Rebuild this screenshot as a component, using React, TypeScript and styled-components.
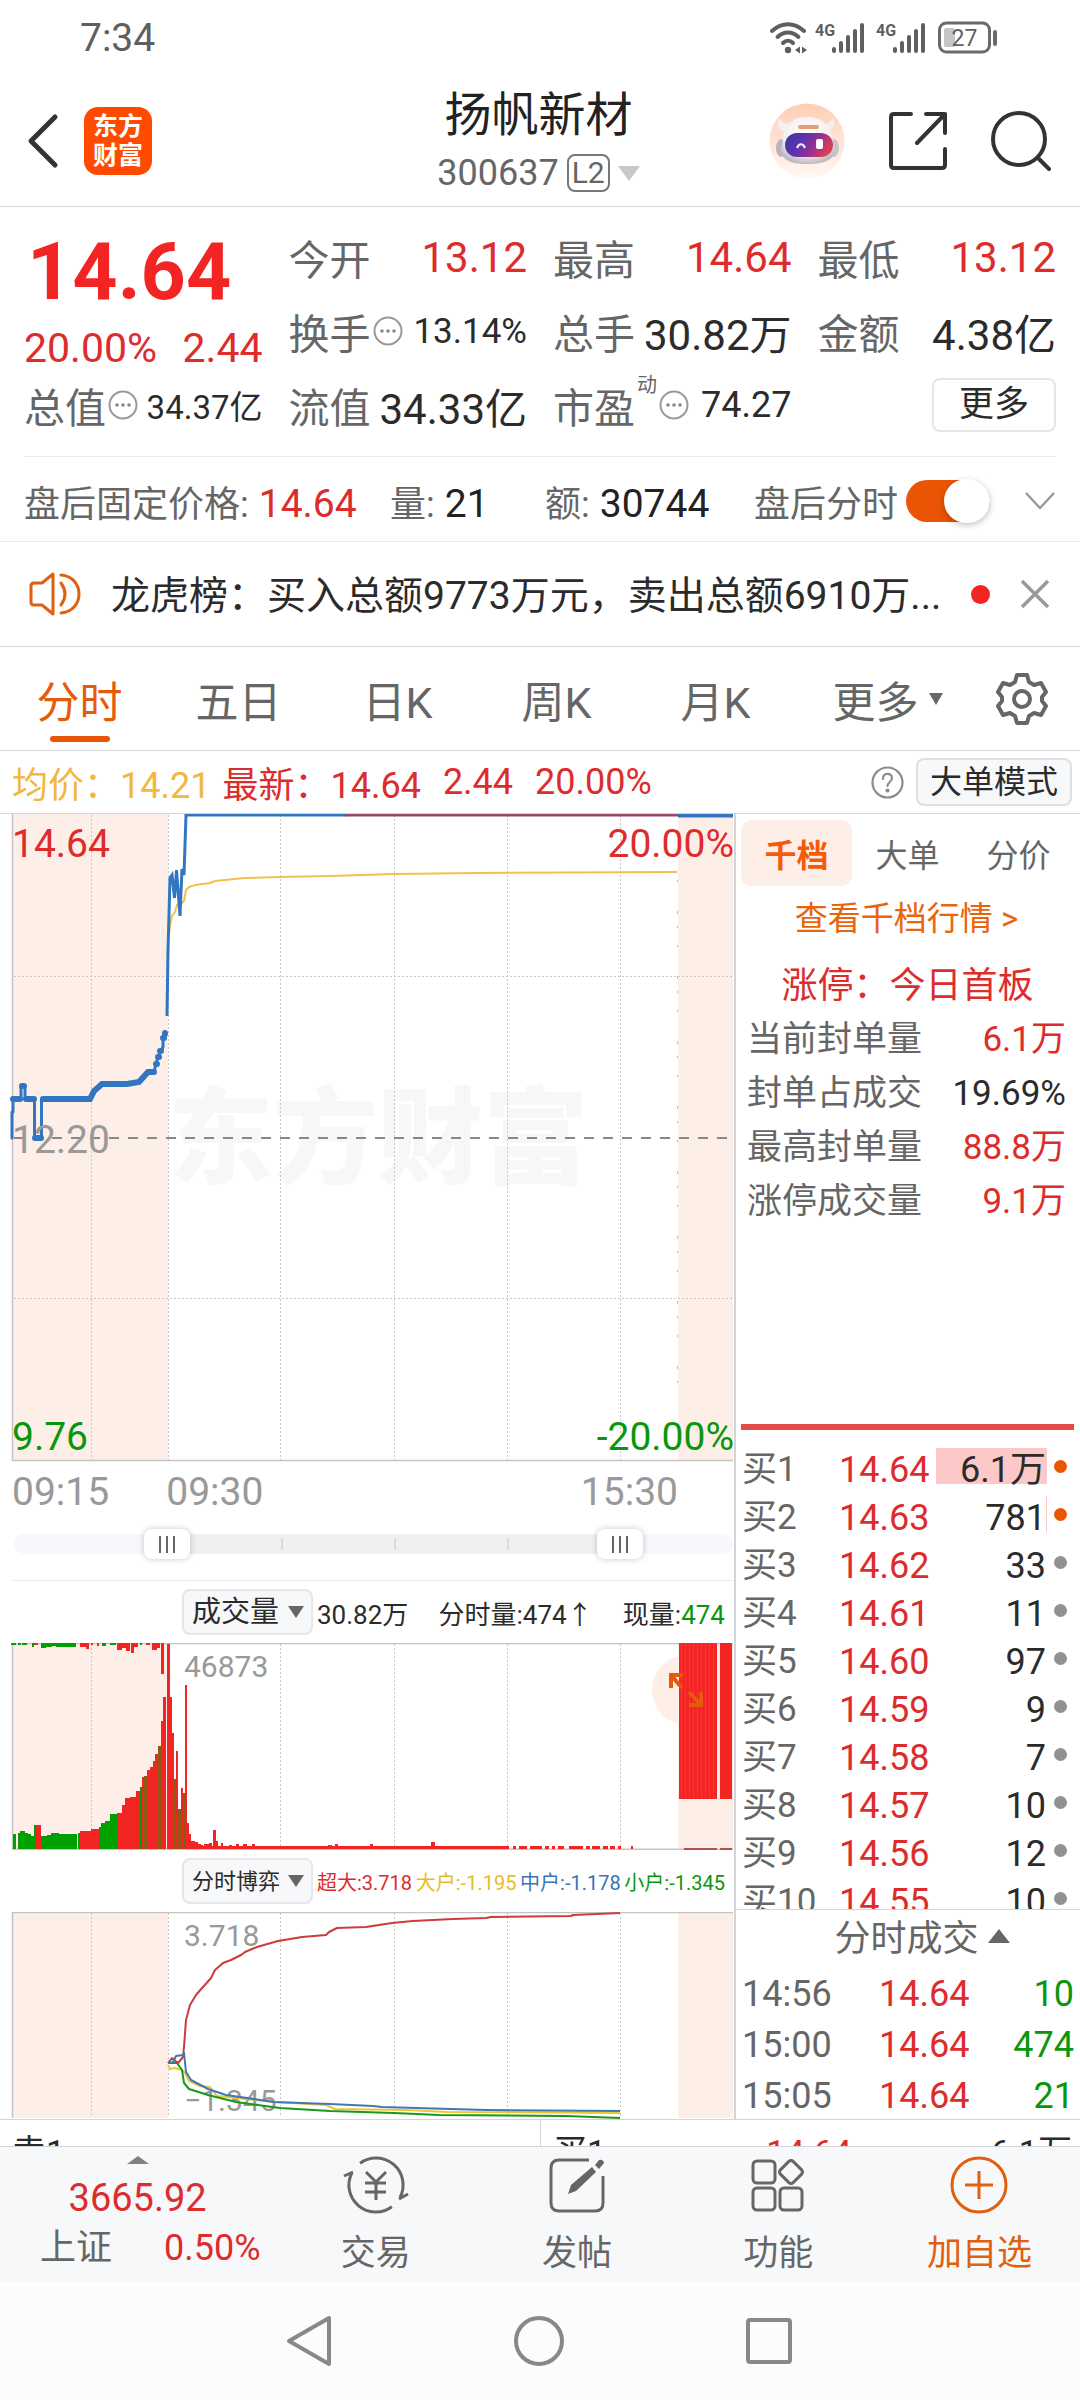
import React from "react";
import styled, { createGlobalStyle, css } from "styled-components";

const C = {
  red: "#dd2c2c",
  bright: "#f22424",
  green: "#0a960a",
  blue: "#3276c2",
  yellow: "#f0b840",
  orange: "#e65a0c",
  ink: "#2b2b2b",
  gray: "#666666",
  light: "#999999",
  line: "#d2d4d6",
  soft: "#ececec",
  tint: "#fdeee7",
  panel: "#f7f8fa",
};

const Global = createGlobalStyle`
  * { box-sizing: border-box; }
  body { margin: 0; background: #fff; }
  body, button, input, select { font-family: Roboto, "Noto Sans CJK SC", sans-serif; }
  button { border: 0; padding: 0; margin: 0; background: none; color: inherit; cursor: pointer; }
  svg { display: block; }
  h1, h2, p, dl, dd, dt { margin: 0; font-weight: 400; }
`;

const App = styled.div`
  min-height: 100vh;
  display: flex;
  flex-direction: column;
  color: ${C.ink};
  overflow: hidden;
`;

/* ---------- status bar ---------- */
const StatusBar = styled.div`
  height: 76px;
  padding: 0 82px 0 80px;
  display: flex;
  align-items: center;
  justify-content: space-between;
  color: #5f5f5f;
  font-size: 39px;
`;
const StatusIcons = styled.div`
  display: flex;
  align-items: center;
`;

/* ---------- header ---------- */
const Header = styled.header`
  height: 131px;
  padding: 0 29px 0 26px;
  display: grid;
  grid-template-columns: 1fr auto 1fr;
  align-items: center;
  border-bottom: 1px solid ${C.line};
`;
const HeaderSide = styled.div<{ $end?: boolean }>`
  display: flex;
  align-items: center;
  gap: ${(p) => (p.$end ? "44px" : "24px")};
  justify-content: ${(p) => (p.$end ? "flex-end" : "flex-start")};
`;
const Logo = styled.div`
  width: 68px;
  height: 68px;
  border-radius: 14px;
  background: #ff4a00;
  color: #fff;
  font-size: 25px;
  font-weight: 700;
  line-height: 29px;
  padding-top: 5px;
  text-align: center;
`;
const TitleBox = styled.div`
  display: flex;
  flex-direction: column;
  align-items: center;
  gap: 2px;
`;
const Title = styled.h1`
  font-size: 47px;
  line-height: 62px;
  color: #222;
`;
const Code = styled.button`
  display: flex;
  align-items: center;
  gap: 8px;
  font-size: 36px;
  line-height: 50px;
  color: ${C.gray};
`;
const Level = styled.span`
  border: 2px solid #777;
  border-radius: 8px;
  font-size: 30px;
  line-height: 34px;
  padding: 0 3px;
`;

/* ---------- quote ---------- */
const Quote = styled.section`
  margin: 0 24px;
  padding: 13px 0 14px;
  display: grid;
  grid-template-columns: repeat(4, minmax(0, 1fr));
  grid-auto-rows: 74px;
  column-gap: 26px;
  border-bottom: 1px solid ${C.soft};
`;
const PriceCell = styled.div`
  grid-row: span 2;
  color: ${C.red};
`;
const BigPrice = styled.div`
  font-size: 79px;
  font-weight: 700;
  line-height: 104px;
  padding-left: 3px;
  color: ${C.bright};
`;
const ChangeRow = styled.div`
  display: flex;
  justify-content: space-between;
  font-size: 41px;
  line-height: 48px;
`;
const QuoteCell = styled.div`
  display: flex;
  align-items: center;
  justify-content: space-between;
  white-space: nowrap;
  font-size: 41px;
`;
const QuoteLabel = styled.span`
  display: flex;
  align-items: center;
  gap: 2px;
  color: ${C.gray};
`;
const Sup = styled.sup`
  font-size: 20px;
  line-height: 20px;
  align-self: flex-start;
`;
const QuoteValue = styled.span<{ $red?: boolean; $size?: number }>`
  color: ${(p) => (p.$red ? C.red : C.ink)};
  font-size: ${(p) => p.$size ?? 42}px;
`;
const MoreCell = styled(QuoteCell)`
  justify-content: flex-end;
`;
const MoreButton = styled.button`
  width: 124px;
  height: 54px;
  border: 2px solid #e6e6e6;
  border-radius: 8px;
  font-size: 35px;
  line-height: 48px;
  color: ${C.ink};
`;

/* ---------- after-hours ---------- */
const AfterHours = styled.section`
  height: 85px;
  padding: 3px 24px 0;
  display: grid;
  grid-template-columns: 366fr 155fr 209fr 302fr;
  align-items: center;
  font-size: 36px;
  color: ${C.gray};
  white-space: nowrap;
  border-bottom: 1px solid ${C.soft};
`;
const AfterValue = styled.b<{ $red?: boolean }>`
  font-weight: 400;
  font-size: 39px;
  margin-left: 10px;
  color: ${(p) => (p.$red ? C.red : "#222")};
`;
const ToggleGroup = styled.div`
  display: flex;
  align-items: center;
  justify-content: space-between;
`;
const ToggleLabel = styled.label`
  display: flex;
  align-items: center;
  gap: 8px;
`;
const Toggle = styled.input`
  appearance: none;
  margin: 0;
  width: 84px;
  height: 42px;
  border-radius: 21px;
  background: #e95504;
  display: flex;
  align-items: center;
  justify-content: flex-end;
  &::before {
    content: "";
    width: 46px;
    height: 44px;
    border-radius: 23px;
    background: #fff;
    box-shadow: 0 2px 6px rgba(0, 0, 0, 0.25);
  }
`;

/* ---------- notice ---------- */
const Notice = styled.section`
  height: 105px;
  padding: 0 30px 0 29px;
  display: flex;
  align-items: center;
  border-bottom: 1px solid ${C.line};
`;
const NoticeText = styled.p`
  flex: 1;
  min-width: 0;
  padding: 0 0 4px 28px;
  font-size: 39px;
  white-space: nowrap;
  overflow: hidden;
`;
const UnreadDot = styled.i`
  width: 19px;
  height: 19px;
  border-radius: 50%;
  background: ${C.bright};
  margin-right: 30px;
`;

/* ---------- tabs ---------- */
const Tabs = styled.nav`
  height: 104px;
  padding-right: 2px;
  display: grid;
  grid-template-columns: repeat(5, 159fr) 171fr 112fr;
  border-bottom: 1px solid ${C.line};
`;
const Tab = styled.button<{ $on?: boolean }>`
  position: relative;
  display: flex;
  align-items: center;
  justify-content: center;
  gap: 10px;
  font-size: 43px;
  color: ${(p) => (p.$on ? C.orange : C.gray)};
  ${(p) =>
    p.$on &&
    css`
      &::after {
        content: "";
        position: absolute;
        bottom: 8px;
        width: 60px;
        height: 6px;
        border-radius: 3px;
        background: #e95504;
      }
    `}
`;
const MenuTab = styled(Tab)`
  padding-left: 14px;
`;

/* ---------- info row ---------- */
const InfoRow = styled.section`
  height: 63px;
  padding: 0 8px 0 12px;
  display: flex;
  align-items: center;
  font-size: 36px;
  white-space: nowrap;
  border-bottom: 1px solid ${C.line};
`;
const InfoItem = styled.span<{ $color: string; $gap: number }>`
  color: ${(p) => p.$color};
  margin-right: ${(p) => p.$gap}px;
`;
const InfoTools = styled.div`
  margin-left: auto;
  display: flex;
  align-items: center;
  gap: 12px;
`;
const ModeButton = styled.button`
  width: 156px;
  height: 48px;
  border: 2px solid #dcdfe3;
  border-radius: 8px;
  background: ${C.panel};
  font-size: 32px;
  line-height: 44px;
  color: ${C.ink};
`;

/* ---------- main ---------- */
const Main = styled.main`
  display: grid;
  grid-template-columns: minmax(0, 734fr) minmax(0, 346fr);
`;
const Left = styled.div`
  min-width: 0;
`;
const ChartSvg = styled.svg`
  width: 100%;
  height: auto;
  font-family: Roboto, "Noto Sans CJK SC", sans-serif;
`;
const Times = styled.div`
  height: 60px;
  display: grid;
  grid-template-columns: 154fr 511fr;
  padding: 0 56px 0 12px;
  align-items: center;
  font-size: 39px;
  color: ${C.light};
`;
const TimesPair = styled.div`
  display: flex;
  justify-content: space-between;
`;
const RangeRow = styled.div`
  height: 59px;
  margin: 0 1px 0 12px;
  padding: 7px 0 0 2px;
  border-bottom: 1px solid ${C.soft};
`;
const RangeTrack = styled.div`
  position: relative;
  height: 30px;
  &::before {
    content: "";
    position: absolute;
    inset: 5px 0;
    border-radius: 10px;
    background:
      linear-gradient(#dcdcdf, #dcdcdf) 37.2% 50% / 2px 12px no-repeat,
      linear-gradient(#dcdcdf, #dcdcdf) 53% 50% / 2px 12px no-repeat,
      linear-gradient(#dcdcdf, #dcdcdf) 68.7% 50% / 2px 12px no-repeat,
      linear-gradient(90deg, #f7f8fb 21%, #f0f0f3 21%, #f0f0f3 84%, #f7f8fb 84%);
  }
`;
const RangeInput = styled.input`
  appearance: none;
  position: absolute;
  inset: 0;
  width: 100%;
  height: 30px;
  margin: 0;
  background: none;
  pointer-events: none;
  &::-webkit-slider-thumb {
    appearance: none;
    pointer-events: auto;
    width: 46px;
    height: 30px;
    border-radius: 8px;
    background:
      linear-gradient(#666, #666) 15px 50% / 2px 17px no-repeat,
      linear-gradient(#666, #666) 22px 50% / 2px 17px no-repeat,
      linear-gradient(#666, #666) 29px 50% / 2px 17px no-repeat,
      #fff;
    box-shadow: 0 0 6px rgba(0, 0, 0, 0.22);
  }
`;
const SubHeader = styled.div`
  height: 62px;
  padding: 0 9px 0 182px;
  display: flex;
  align-items: center;
  white-space: nowrap;
`;
const Picker = styled.label`
  position: relative;
  display: block;
  svg {
    position: absolute;
    right: 9px;
    top: 17px;
    pointer-events: none;
  }
`;
const Select = styled.select<{ $size: number }>`
  appearance: none;
  display: block;
  width: 131px;
  height: 46px;
  padding: 0 0 0 8px;
  border: 2px solid #e4e6ea;
  border-radius: 8px;
  background: ${C.panel};
  font-size: ${(p) => p.$size}px;
  color: ${C.ink};
`;
const Readout = styled.div<{ $size: number }>`
  flex: 1;
  margin-left: 4px;
  display: flex;
  justify-content: space-between;
  font-size: ${(p) => p.$size}px;
`;
const Ink = styled.span<{ $color: string }>`
  color: ${(p) => p.$color};
`;
const ChartBox = styled.div`
  position: relative;
`;
const ExpandButton = styled.button`
  position: absolute;
  top: 12px;
  right: 13px;
  width: 70px;
  height: 70px;
  border-radius: 50%;
  display: flex;
  align-items: center;
  justify-content: center;
`;

/* ---------- right panel ---------- */
const Right = styled.aside`
  min-width: 0;
  border-left: 2px solid ${C.line};
  display: flex;
  flex-direction: column;
`;
const Stats = styled.div`
  min-height: 616px;
  margin: 0 6px 0 5px;
  padding-top: 6px;
  border-bottom: 6px solid #e44a4a;
`;
const DepthTabs = styled.div`
  display: grid;
  grid-template-columns: repeat(3, 1fr);
`;
const DepthTab = styled.button<{ $on?: boolean }>`
  height: 66px;
  border-radius: 10px;
  font-size: 32px;
  font-weight: ${(p) => (p.$on ? 700 : 400)};
  background: ${(p) => (p.$on ? C.tint : "none")};
  color: ${(p) => (p.$on ? "#f55a08" : C.gray)};
`;
const DepthLink = styled.a`
  display: block;
  margin-bottom: 8px;
  padding-right: 2px;
  text-align: center;
  font-size: 33px;
  line-height: 65px;
  color: #ea640c;
  text-decoration: none;
`;
const LimitTitle = styled.p`
  text-align: center;
  font-size: 36px;
  line-height: 54px;
  color: ${C.red};
`;
const StatList = styled.dl`
  padding: 0 8px 0 6px;
  font-size: 35px;
  line-height: 54px;
`;
const StatRow = styled.div`
  display: flex;
  justify-content: space-between;
  color: ${C.gray};
`;
const StatValue = styled.dd<{ $red?: boolean }>`
  color: ${(p) => (p.$red ? C.red : C.ink)};
`;
const Book = styled.div`
  flex: 1 1 0;
  min-height: 0;
  overflow: hidden;
  padding: 18px 6px 0 6px;
`;
const BookTable = styled.table`
  width: 100%;
  table-layout: fixed;
  border-collapse: collapse;
  font-size: 36px;
  line-height: 44px;
  white-space: nowrap;
  th, td { padding: 0; font-weight: 400; text-align: left; vertical-align: top; height: 48px; }
  th { width: 97px; font-size: 35px; color: ${C.gray}; }
`;
const PriceTd = styled.td`
  width: 97px;
  color: ${C.red};
`;
const Qty = styled.span<{ $fill: number }>`
  display: block;
  height: 36px;
  padding-right: 1px;
  text-align: right;
  background: linear-gradient(#fcc8c8, #fcc8c8) right / ${(p) => p.$fill}% 100% no-repeat;
`;
const DotTd = styled.td`
  width: 27px;
`;
const Dot = styled.i<{ $on?: boolean }>`
  display: block;
  width: 13px;
  height: 13px;
  margin: 12px 0 0 7px;
  border-radius: 50%;
  background: ${(p) => (p.$on ? "#e95504" : "#909095")};
`;
const Trades = styled.section`
  height: 210px;
  border-top: 1px solid ${C.line};
  padding: 0 6px 0 6px;
`;
const TradesTitle = styled.button`
  width: 100%;
  display: flex;
  justify-content: center;
  gap: 9px;
  padding-left: 28px;
  font-size: 36px;
  line-height: 59px;
  color: ${C.gray};
  svg { margin-top: 19px; }
`;
const TradesTable = styled.table`
  width: 100%;
  table-layout: fixed;
  border-collapse: collapse;
  font-size: 36px;
  line-height: 51px;
  th, td { padding: 0; font-weight: 400; text-align: left; }
  th { width: 137px; color: ${C.gray}; }
  td { color: ${C.red}; }
  td + td { color: ${C.green}; text-align: right; }
`;

/* ---------- bottom ---------- */
const Peek = styled.section`
  height: 28px;
  overflow: hidden;
  display: grid;
  grid-template-columns: 1fr 1fr;
  border: solid ${C.line};
  border-width: 1px 0;
  font-size: 34px;
  line-height: 64px;
`;
const PeekSide = styled.div`
  padding: 0 8px 0 12px;
  display: grid;
  grid-template-columns: 214fr 84fr 221fr;
  height: 64px;
  & + & { border-left: 1px solid ${C.line}; }
  span:last-child:not(:first-child) { text-align: right; }
`;
const BottomNav = styled.nav`
  height: 135px;
  background: ${C.panel};
  display: grid;
  grid-template-columns: 275fr repeat(4, 201fr);
`;
const IndexBox = styled.button`
  display: flex;
  flex-direction: column;
  align-items: center;
  padding: 9px 0 0;
  color: ${C.red};
  font-size: 38px;
  line-height: 49px;
`;
const IndexValue = styled.span`
  margin-top: 10px;
`;
const IndexRow = styled.span`
  display: flex;
  gap: 52px;
  align-self: stretch;
  padding-left: 40px;
  font-size: 36px;
  line-height: 51px;
`;
const NavItem = styled.button<{ $hot?: boolean }>`
  display: flex;
  flex-direction: column;
  align-items: center;
  gap: 16px;
  padding-top: 9px;
  font-size: 35px;
  line-height: 48px;
  color: ${(p) => (p.$hot ? "#e0600f" : C.gray)};
`;
const SystemNav = styled.nav`
  height: 118px;
  background: #fcfcfc;
  display: flex;
  align-items: center;
  justify-content: center;
  gap: 182px;
  padding-right: 2px;
`;

/* ---------- icons ---------- */
const Signal = ({ gap = 0 }: { gap?: number }) => (
  <svg width={50 + gap} height="34" viewBox={`0 0 ${50 + gap} 34`} fill="#5f5f5f">
    <text x="0" y="15" fontSize="16" fontWeight="700">4G</text>
    <rect x="17" y="26" width="4" height="6" rx="2" />
    <rect x="24" y="20" width="4" height="12" rx="2" />
    <rect x="31" y="14" width="4" height="18" rx="2" />
    <rect x="38" y="8" width="4" height="24" rx="2" />
    <rect x="45" y="2" width="4" height="30" rx="2" />
  </svg>
);

const WifiIcon = () => (
  <svg width="45" height="34" viewBox="0 0 45 34" fill="none" stroke="#5f5f5f" strokeWidth="4" strokeLinecap="round">
    <path d="M2 10C12 1 24 1 34 10" />
    <path d="M7.500 16C14 10 22 10 28.500 16" />
    <path d="M13 22C16 19 20 19 23 22" />
    <circle cx="18" cy="29" r="3.200" fill="#5f5f5f" stroke="none" />
    <path d="M30 25.500v7l-5-3.500zM32 25.500v7l5-3.500z" fill="#5f5f5f" stroke="none" />
  </svg>
);

const BatteryIcon = () => (
  <svg width="60" height="34" viewBox="0 0 60 34">
    <rect x="1.500" y="2" width="50" height="29" rx="7" fill="none" stroke="#6a6a6a" strokeWidth="3" />
    <rect x="6" y="7" width="11" height="19" rx="2" fill="#c6c6c6" />
    <text x="26.500" y="25" fontSize="23" textAnchor="middle" fill="#5f5f5f">27</text>
    <rect x="55" y="9" width="4" height="16" rx="2" fill="#6a6a6a" />
  </svg>
);

const BackIcon = () => (
  <svg width="34" height="56" viewBox="0 0 34 56" fill="none" stroke="#333" strokeWidth="5" strokeLinecap="round" strokeLinejoin="round">
    <path d="M29 4L5 28l24 24" />
  </svg>
);

const RobotIcon = () => (
  <svg width="76" height="76" viewBox="0 0 76 76">
    <defs>
      <linearGradient id="halo" x1="0" y1="0" x2="0" y2="1">
        <stop offset="0" stopColor="#ffcdb4" />
        <stop offset="0.500" stopColor="#ffe3d6" />
        <stop offset="1" stopColor="#fff8f5" />
      </linearGradient>
      <linearGradient id="visor" x1="0" y1="0" x2="1" y2="0.300">
        <stop offset="0" stopColor="#3a3a9e" />
        <stop offset="0.400" stopColor="#5b32b0" />
        <stop offset="0.750" stopColor="#a02f8e" />
        <stop offset="1" stopColor="#d63f55" />
      </linearGradient>
      <radialGradient id="shell" cx="0.500" cy="0.350" r="0.650">
        <stop offset="0" stopColor="#ffffff" />
        <stop offset="0.700" stopColor="#f3efef" />
        <stop offset="1" stopColor="#bdb9be" />
      </radialGradient>
    </defs>
    <circle cx="38" cy="38" r="37.500" fill="url(#halo)" />
    <path d="M10 15c-3 7 0 12 7 15l7-10c-7 2-11 0-14-5zM64 15c3 7 0 12-7 15l-7-10c7 2 11 0 14-5z" fill="#f4f0ef" />
    <ellipse cx="12" cy="45" rx="5" ry="9" fill="#b9b5bb" />
    <ellipse cx="65" cy="45" rx="5" ry="9" fill="#cbc5c9" />
    <path d="M14 36c1-15 10-22 24-22s24 8 25 22l3 12c-2 11-15 13-28 13s-24-2-26-13z" fill="url(#shell)" />
    <rect x="29" y="22" width="21" height="4" rx="2" fill="#e5a06f" />
    <rect x="16" y="30" width="48" height="24" rx="12" fill="url(#visor)" />
    <path d="M28 45c2-5 6-5 8 0" fill="none" stroke="#f4e8ff" strokeWidth="2.200" />
    <rect x="47" y="36" width="7" height="10" rx="2" fill="#fff" />
  </svg>
);

const ShareIcon = () => (
  <svg width="58" height="60" viewBox="0 0 58 60" fill="none" stroke="#333" strokeWidth="4" strokeLinecap="round" strokeLinejoin="round">
    <path d="M22 3H5Q2 3 2 6v48q0 3 3 3h48q3 0 3-3V38" />
    <path d="M37 3h19v19M56 3L28 32" />
  </svg>
);

const SearchIcon = () => (
  <svg width="60" height="60" viewBox="0 0 60 60" fill="none" stroke="#333" strokeWidth="4" strokeLinecap="round">
    <circle cx="28" cy="28" r="26" />
    <path d="M47 47l11 11" />
  </svg>
);

const MoreDots = () => (
  <svg width="30" height="30" viewBox="0 0 30 30">
    <circle cx="15" cy="15" r="13.500" fill="none" stroke="#999" strokeWidth="2" />
    <circle cx="9" cy="15" r="1.800" fill="#888" />
    <circle cx="15" cy="15" r="1.800" fill="#888" />
    <circle cx="21" cy="15" r="1.800" fill="#888" />
  </svg>
);

const Caret = ({ w, h, up, color = "#666" }: { w: number; h: number; up?: boolean; color?: string }) => (
  <svg width={w} height={h} viewBox="0 0 10 10" preserveAspectRatio="none" fill={color}>
    <path d={up ? "M0 10L5 0l5 10z" : "M0 0h10L5 10z"} />
  </svg>
);

const SpeakerIcon = () => (
  <svg width="54" height="46" viewBox="0 0 54 46" fill="none" stroke="#e0600f" strokeWidth="3" strokeLinecap="round" strokeLinejoin="round">
    <path d="M24 3v40L13 34H5q-3 0-3-3V15q0-3 3-3h8z" />
    <path d="M32 12q8 11 0 22M32 4c24 2 24 36 0 38" />
  </svg>
);

const GearIcon = () => (
  <svg width="52" height="52" viewBox="0 0 52 52" fill="none" stroke="#666" strokeWidth="4" strokeLinejoin="round">
    <path d="M21 2h10l2 7 5 3 7-2 5 9-4 5v4l4 5-5 9-7-2-5 3-2 7H21l-2-7-5-3-7 2-5-9 4-5v-4l-4-5 5-9 7 2 5-3z" />
    <circle cx="26" cy="26" r="8" />
  </svg>
);

const HelpIcon = () => (
  <svg width="33" height="33" viewBox="0 0 33 33" fill="none" stroke="#8c8c8c" strokeWidth="2.200" strokeLinecap="round">
    <circle cx="16.500" cy="16.500" r="15" />
    <path d="M12 13c0-7 9-6.500 9-1 0 4-4.500 4-4.500 8" />
    <circle cx="16.500" cy="24.500" r="1" fill="#8c8c8c" />
  </svg>
);

const NAV_ICONS: Record<string, React.ReactNode> = {
  交易: (
    <svg width="66" height="58" viewBox="0 0 66 58" fill="none" stroke="#666" strokeWidth="3">
      <path d="M17.100 7.200A27 27 0 0 1 57.100 41.300M48.900 50.800A27 27 0 0 1 8.900 16.700" />
      <path d="M1 20l9-4M65 38l-9 5" />
      <path d="M23 16l10 10 10-10M22 27h21M22 36h21M33 26v18" />
    </svg>
  ),
  发帖: (
    <svg width="56" height="58" viewBox="0 0 56 58" fill="none" stroke="#666" strokeWidth="3">
      <path d="M40 4H10q-8 0-8 8v35q0 8 8 8h36q8 0 8-8V20" />
      <path d="M19 38l3-9 21-18 4 5-20 19z M46 9l4-5q4-1 5 3l-5 6z" fill="#666" stroke="none" />
    </svg>
  ),
  功能: (
    <svg width="54" height="58" viewBox="0 0 54 58" fill="none" stroke="#666" strokeWidth="3">
      <rect x="2" y="5" width="22" height="22" rx="4" />
      <rect x="2" y="32" width="22" height="22" rx="4" />
      <rect x="29" y="32" width="22" height="22" rx="4" />
      <rect x="31" y="7" width="18" height="18" rx="3" transform="rotate(45 40 16)" />
    </svg>
  ),
  加自选: (
    <svg width="58" height="58" viewBox="0 0 58 58" fill="none" stroke="#e0600f" strokeWidth="3">
      <circle cx="29" cy="29" r="27" />
      <path d="M15 29h28M29 15v28" />
    </svg>
  ),
};

/* ---------- data ---------- */
const GRID_X = [91, 168, 280, 394, 507, 620];

const BOOK: [string, string, string, number][] = [
  ["买1", "14.64", "6.1万", 100],
  ["买2", "14.63", "781", 1],
  ["买3", "14.62", "33", 0],
  ["买4", "14.61", "11", 0],
  ["买5", "14.60", "97", 0],
  ["买6", "14.59", "9", 0],
  ["买7", "14.58", "7", 0],
  ["买8", "14.57", "10", 0],
  ["买9", "14.56", "12", 0],
  ["买10", "14.55", "10", 0],
];

const STATS: [string, string, boolean][] = [
  ["当前封单量", "6.1万", true],
  ["封单占成交", "19.69%", false],
  ["最高封单量", "88.8万", true],
  ["涨停成交量", "9.1万", true],
];

const TRADES = [
  ["14:56", "14.64", "10"],
  ["15:00", "14.64", "474"],
  ["15:05", "14.64", "21"],
];

/* volume bars: [x, width, height, colour] measured up from the base line */
const R = "#f22424";
const G = "#00a000";
const M = "#8c5a10";
const VOLUME: [number, number, number, string][] = [
  [13, 3, 15, G], [18, 2, 16, G], [20, 5, 18, G], [25, 3, 16, G], [28, 3, 15, G], [31, 3, 13, G], [34, 2, 24, G],
  [36, 5, 24, R], [41, 6, 13, G], [47, 4, 14, G], [51, 8, 16, G], [59, 8, 15, G], [67, 10, 15, G],
  [78, 2, 16, G], [80, 11, 18, R], [91, 8, 20, R], [99, 2, 22, G], [101, 4, 26, G], [105, 5, 28, G], [110, 7, 35, G],
  [117, 5, 36, R], [122, 3, 44, R], [125, 5, 51, R], [130, 6, 52, R], [136, 4, 58, R], [140, 2, 62, G],
  [142, 2, 72, R], [144, 3, 73, M], [147, 3, 79, R], [150, 3, 82, R], [153, 2, 88, R], [155, 3, 95, R],
  [158, 3, 103, M], [161, 2, 128, R], [163, 3, 152, R], [167, 3, 205, R], [170, 2, 152, R],
  [172, 2, 116, R], [174, 2, 70, M], [176, 2, 98, R], [178, 3, 40, M], [181, 2, 61, R], [183, 2, 56, M],
  [185, 2, 164, R], [187, 2, 26, R], [189, 2, 15, R], [191, 4, 8, R], [195, 3, 7, R], [198, 3, 5, R],
  [201, 2, 4, R], [204, 5, 5, R], [209, 3, 6, R], [213, 3, 19, R], [216, 2, 8, R], [221, 2, 6, R],
  [229, 3, 4, R], [236, 3, 5, R], [243, 4, 5, R], [252, 3, 5, R], [201, 308, 3, R],
  [328, 4, 4, R], [335, 3, 5, R], [370, 3, 5, R], [431, 4, 7, R],
  [513, 3, 3, R], [519, 8, 3, R], [530, 12, 3, R], [545, 4, 3, R], [552, 3, 3, R], [558, 6, 3, R],
  [569, 14, 3, R], [586, 4, 3, R], [592, 8, 3, R], [603, 5, 3, R], [610, 5, 3, R], [618, 3, 3, R], [631, 2, 3, R],
];
/* bars hanging from the top line */
const UNMATCHED: [number, number, number, string][] = [
  [11, 5, 1, G], [18, 3, 1, G], [22, 5, 1, G], [32, 2, 3, G], [34, 4, 1, R], [41, 5, 4, G], [46, 6, 3, G],
  [52, 4, 2, G], [56, 8, 3, G], [64, 12, 3, G], [80, 6, 3, R], [86, 3, 5, R], [91, 2, 1, R], [97, 2, 2, R],
  [102, 4, 2, G], [110, 6, 1, G], [117, 5, 6, R], [122, 4, 4, R], [126, 4, 7, R], [131, 3, 9, R], [134, 4, 3, R],
  [140, 2, 1, G], [146, 4, 1, R], [152, 5, 6, R], [157, 3, 4, R], [161, 3, 30, R],
];
const CLOSED_X = [679, 683, 687, 691, 695, 699, 703, 707, 711];

const GridLines = ({ top, bottom }: { top: number; bottom: number }) => (
  <g stroke="#c9c9c9" strokeWidth="1" strokeDasharray="2 2">
    {GRID_X.map((x) => (
      <path key={x} d={`M${x + 0.5} ${top}V${bottom}`} />
    ))}
  </g>
);

const PriceChart = () => (
  <ChartSvg viewBox="0 814 734 648" role="img" aria-label="分时">
    <rect x="12" y="814" width="156" height="646" fill={C.tint} />
    <rect x="678" y="814" width="55" height="646" fill={C.tint} />
    <text x="168" y="1175" fontSize="105" fontWeight="900" fill="#f7f7f7">东方财富</text>
    <GridLines top={815} bottom={1460} />
    <path d="M14 976.500H733M14 1298.500H733" stroke="#c9c9c9" strokeDasharray="2 2" />
    <path d="M12.500 814V1460.500H733" fill="none" stroke="#c4c4c4" strokeWidth="1.500" />
    <path d="M677.500 880V1400" stroke="#f0a8a8" strokeWidth="1" strokeDasharray="2 29 3 12 2 17" />
    <path d="M14 1138H733" stroke="#858a88" strokeWidth="2" strokeDasharray="10 9" />
    <path
      d="M169 935L170 925 172 916 175 912 177 905 180 905 184 901 186 890 189 887 195 885 210 883 215 881 245 878 280 877 330 876 394 874 477 873 677 872"
      fill="none" stroke="#f3c04f" strokeWidth="2"
    />
    <path
      d="M12 1138V1112h1V1099H21V1086h4V1099H34.500V1138H41.500V1099H90L94 1091 98 1087 102 1084H127L133 1083 139 1081 143 1078 148 1072H154L156 1064 158 1057 161 1051 163 1047V1038L165 1032"
      fill="none" stroke={C.blue} strokeWidth="3" strokeLinejoin="round" strokeLinecap="round"
    />
    <path
      d="M13 1099h7M22 1086h2M26 1099h8M35 1138h6M43 1099H90L94 1091 102 1084H127L139 1082 148 1072H154M156 1064h1M158 1057h1M160 1051h1M163 1038h1M165 1033v1"
      fill="none" stroke={C.blue} strokeWidth="6" strokeLinecap="round"
    />
    <path
      d="M167 1016L168 950 169 915 170 878 172 875 174.500 898 176.500 870 180 916 182 869 184 875 186 815H346"
      fill="none" stroke={C.blue} strokeWidth="3"
    />
    <path d="M345 815H678" stroke="#98466a" strokeWidth="3" />
    <path d="M678 815.500H733" stroke={C.blue} strokeWidth="4" />
    <g fontSize="39">
      <text x="12" y="857" fill={C.red}>14.64</text>
      <text x="734" y="857" fill={C.red} textAnchor="end">20.00%</text>
      <text x="12" y="1153" fill="#999">12.20</text>
      <text x="12" y="1450" fill={C.green}>9.76</text>
      <text x="734" y="1450" fill={C.green} textAnchor="end">-20.00%</text>
    </g>
  </ChartSvg>
);

const VolumeChart = () => (
  <ChartSvg viewBox="0 1643 734 207" role="img" aria-label="成交量">
    <rect x="12" y="1643" width="156" height="206" fill={C.tint} />
    <rect x="678" y="1643" width="55" height="206" fill={C.tint} />
    <circle cx="687" cy="1690" r="35" fill="#fdeee7" />
    <GridLines top={1644} bottom={1848} />
    <path d="M12.500 1849V1643.500H733M12 1849.300H733" fill="none" stroke="#c4c4c4" strokeWidth="1.500" />
    {VOLUME.map(([x, w, h, c], i) => (
      <rect key={i} x={x} y={1849 - h} width={w} height={h} fill={c} />
    ))}
    {UNMATCHED.map(([x, w, h, c], i) => (
      <rect key={i} x={x} y={1643} width={w} height={h + 1} fill={c} />
    ))}
    <rect x="679" y="1643" width="38" height="156" fill={R} />
    <rect x="720" y="1643" width="12" height="156" fill={R} />
    {CLOSED_X.map((x) => (
      <rect key={x} x={x + 2} y="1643" width="1" height="155" fill="#f4392f" />
    ))}
    <path d="M684 1849h33M720 1849h12" stroke="#a02828" strokeWidth="1.500" />
    <text x="184" y="1677" fontSize="30" fill="#999">46873</text>
  </ChartSvg>
);

const FLOWS: [string, string][] = [
  ["#efc62e", "M168 2065L170 2069 175 2068 182 2070 185 2073 189 2081 200 2086 210 2087 217 2096 236 2098 274 2102 326 2105 335 2109 406 2110 448 2112 620 2113"],
  ["#189a18", "M168 2063L177 2063 182 2070 184 2083 189 2089 208 2095 236 2102 280 2108 330 2111 394 2113 439 2115 566 2116 620 2118"],
  ["#cf3a3a", "M168 2063L172 2058 178 2063 183 2057 184 2047 186 2020 190 2005 196 1995 203 1987 211 1978 215 1970 223 1963 231 1960 241 1955 245 1952 257 1947 278 1941 302 1937 326 1935 329 1932 337 1928 366 1927 392 1923 413 1921 453 1919 486 1918 491 1917 571 1916 573 1915 620 1913"],
  ["#3f78b8", "M168 2063L173 2062 176 2056 183 2055 184 2053 186 2072 191 2080 208 2089 226 2095 274 2102 330 2104 373 2106 382 2107 486 2110 620 2111"],
];

const FlowChart = () => (
  <ChartSvg viewBox="0 1912 734 207" role="img" aria-label="分时博弈">
    <rect x="12" y="1912" width="156" height="206" fill={C.tint} />
    <rect x="678" y="1912" width="55" height="206" fill={C.tint} />
    <GridLines top={1913} bottom={2117} />
    <path d="M12.500 2118V1912.500H733" fill="none" stroke="#c4c4c4" strokeWidth="1.500" />
    <g fontSize="30" fill="#999">
      <text x="184" y="1946">3.718</text>
      <text x="184" y="2111">−1.345</text>
    </g>
    {FLOWS.map(([color, d]) => (
      <path key={color} d={d} fill="none" stroke={color} strokeWidth="2" strokeLinejoin="round" />
    ))}
  </ChartSvg>
);

export default function StockPage() {
  return (
    <App>
      <Global />
      <StatusBar>
        <span>7:34</span>
        <StatusIcons>
          <WifiIcon />
          <Signal gap={11} />
          <Signal gap={12} />
          <BatteryIcon />
        </StatusIcons>
      </StatusBar>

      <Header>
        <HeaderSide>
          <button aria-label="返回"><BackIcon /></button>
          <Logo>东方<br />财富</Logo>
        </HeaderSide>
        <TitleBox>
          <Title>扬帆新材</Title>
          <Code>
            300637<Level>L2</Level>
            <Caret w={22} h={15} color="#c8c8c8" />
          </Code>
        </TitleBox>
        <HeaderSide $end>
          <button aria-label="智能助手"><RobotIcon /></button>
          <button aria-label="分享"><ShareIcon /></button>
          <button aria-label="搜索"><SearchIcon /></button>
        </HeaderSide>
      </Header>

      <Quote>
        <PriceCell>
          <BigPrice>14.64</BigPrice>
          <ChangeRow><span>20.00%</span><span>2.44</span></ChangeRow>
        </PriceCell>
        <QuoteCell><QuoteLabel>今开</QuoteLabel><QuoteValue $red>13.12</QuoteValue></QuoteCell>
        <QuoteCell><QuoteLabel>最高</QuoteLabel><QuoteValue $red>14.64</QuoteValue></QuoteCell>
        <QuoteCell><QuoteLabel>最低</QuoteLabel><QuoteValue $red>13.12</QuoteValue></QuoteCell>
        <QuoteCell><QuoteLabel>换手<MoreDots /></QuoteLabel><QuoteValue $size={35}>13.14%</QuoteValue></QuoteCell>
        <QuoteCell><QuoteLabel>总手</QuoteLabel><QuoteValue>30.82万</QuoteValue></QuoteCell>
        <QuoteCell><QuoteLabel>金额</QuoteLabel><QuoteValue>4.38亿</QuoteValue></QuoteCell>
        <QuoteCell><QuoteLabel>总值<MoreDots /></QuoteLabel><QuoteValue $size={33}>34.37亿</QuoteValue></QuoteCell>
        <QuoteCell><QuoteLabel>流值</QuoteLabel><QuoteValue>34.33亿</QuoteValue></QuoteCell>
        <QuoteCell><QuoteLabel>市盈<Sup>动</Sup><MoreDots /></QuoteLabel><QuoteValue $size={36}>74.27</QuoteValue></QuoteCell>
        <MoreCell><MoreButton>更多</MoreButton></MoreCell>
      </Quote>

      <AfterHours>
        <span>盘后固定价格:<AfterValue $red>14.64</AfterValue></span>
        <span>量:<AfterValue>21</AfterValue></span>
        <span>额:<AfterValue>30744</AfterValue></span>
        <ToggleGroup>
          <ToggleLabel>盘后分时<Toggle type="checkbox" defaultChecked /></ToggleLabel>
          <button aria-label="展开">
            <svg width="32" height="20" viewBox="0 0 32 20" fill="none" stroke="#999" strokeWidth="2.500"><path d="M2 2l14 15L30 2" /></svg>
          </button>
        </ToggleGroup>
      </AfterHours>

      <Notice>
        <SpeakerIcon />
        <NoticeText>龙虎榜：买入总额9773万元，卖出总额6910万...</NoticeText>
        <UnreadDot />
        <button aria-label="关闭">
          <svg width="30" height="30" viewBox="0 0 30 30" fill="none" stroke="#999" strokeWidth="3.500"><path d="M2 2l26 26M28 2L2 28" /></svg>
        </button>
      </Notice>

      <Tabs>
        <Tab $on>分时</Tab>
        <Tab>五日</Tab>
        <Tab>日K</Tab>
        <Tab>周K</Tab>
        <Tab>月K</Tab>
        <MenuTab>更多<Caret w={14} h={12} /></MenuTab>
        <Tab aria-label="设置"><GearIcon /></Tab>
      </Tabs>

      <InfoRow>
        <InfoItem $color={C.yellow} $gap={12}>均价：14.21</InfoItem>
        <InfoItem $color={C.red} $gap={22}>最新：14.64</InfoItem>
        <InfoItem $color={C.red} $gap={22}>2.44</InfoItem>
        <InfoItem $color={C.red} $gap={0}>20.00%</InfoItem>
        <InfoTools>
          <button aria-label="帮助"><HelpIcon /></button>
          <ModeButton>大单模式</ModeButton>
        </InfoTools>
      </InfoRow>

      <Main>
        <Left>
          <PriceChart />
          <Times>
            <span>09:15</span>
            <TimesPair><span>09:30</span><span>15:30</span></TimesPair>
          </Times>
          <RangeRow>
            <RangeTrack>
              <RangeInput type="range" aria-label="开始时间" min="0" max="100" step="0.1" defaultValue="19.3" />
              <RangeInput type="range" aria-label="结束时间" min="0" max="100" step="0.1" defaultValue="86.7" />
            </RangeTrack>
          </RangeRow>
          <SubHeader>
            <Picker>
              <Select $size={29} aria-label="指标一"><option>成交量</option></Select>
              <Caret w={16} h={12} />
            </Picker>
            <Readout $size={26}>
              <span>30.82万</span>
              <span>分时量:474↑</span>
              <span>现量:<Ink $color={C.green}>474</Ink></span>
            </Readout>
          </SubHeader>
          <ChartBox>
            <VolumeChart />
            <ExpandButton aria-label="放大">
              <svg width="34" height="34" viewBox="0 0 34 34" fill="none" stroke="#e65a0c" strokeWidth="4">
                <path d="M2 15V2h12M2 2l11 13M32 19v13H20M32 32L20 19" />
              </svg>
            </ExpandButton>
          </ChartBox>
          <SubHeader>
            <Picker>
              <Select $size={22} aria-label="指标二"><option>分时博弈</option></Select>
              <Caret w={16} h={12} />
            </Picker>
            <Readout $size={20}>
              <Ink $color={C.red}>超大:3.718</Ink>
              <Ink $color="#e8bd1c">大户:-1.195</Ink>
              <Ink $color="#3a74b5">中户:-1.178</Ink>
              <Ink $color={C.green}>小户:-1.345</Ink>
            </Readout>
          </SubHeader>
          <FlowChart />
        </Left>

        <Right>
          <Stats>
            <DepthTabs>
              <DepthTab $on>千档</DepthTab>
              <DepthTab>大单</DepthTab>
              <DepthTab>分价</DepthTab>
            </DepthTabs>
            <DepthLink href="#depth">查看千档行情 &gt;</DepthLink>
            <LimitTitle>涨停：今日首板</LimitTitle>
            <StatList>
              {STATS.map(([label, value, red]) => (
                <StatRow key={label}><dt>{label}</dt><StatValue $red={red}>{value}</StatValue></StatRow>
              ))}
            </StatList>
          </Stats>
          <Book>
            <BookTable>
              <tbody>
                {BOOK.map(([label, price, qty, fill], i) => (
                  <tr key={label}>
                    <th scope="row">{label}</th>
                    <PriceTd>{price}</PriceTd>
                    <td><Qty $fill={fill}>{qty}</Qty></td>
                    <DotTd><Dot $on={i < 2} /></DotTd>
                  </tr>
                ))}
              </tbody>
            </BookTable>
          </Book>
          <Trades>
            <TradesTitle>分时成交<Caret w={22} h={14} up /></TradesTitle>
            <TradesTable>
              <tbody>
                {TRADES.map(([time, price, qty]) => (
                  <tr key={time}><th scope="row">{time}</th><td>{price}</td><td>{qty}</td></tr>
                ))}
              </tbody>
            </TradesTable>
          </Trades>
        </Right>
      </Main>

      <Peek>
        <PeekSide><span>卖1</span></PeekSide>
        <PeekSide>
          <span>买1</span>
          <Ink $color={C.red}>14.64</Ink>
          <span>6.1万</span>
        </PeekSide>
      </Peek>

      <BottomNav>
        <IndexBox>
          <Caret w={22} h={8} up color="#808080" />
          <IndexValue>3665.92</IndexValue>
          <IndexRow><Ink $color={C.gray}>上证</Ink>0.50%</IndexRow>
        </IndexBox>
        {Object.keys(NAV_ICONS).map((name) => (
          <NavItem key={name} $hot={name === "加自选"}>{NAV_ICONS[name]}{name}</NavItem>
        ))}
      </BottomNav>

      <SystemNav>
        <button aria-label="系统返回">
          <svg width="46" height="52" viewBox="0 0 46 52" fill="none" stroke="#888" strokeWidth="4" strokeLinejoin="round"><path d="M43 3v46L3 26z" /></svg>
        </button>
        <button aria-label="主页">
          <svg width="50" height="50" viewBox="0 0 50 50" fill="none" stroke="#888" strokeWidth="4"><circle cx="25" cy="25" r="23" /></svg>
        </button>
        <button aria-label="最近任务">
          <svg width="46" height="46" viewBox="0 0 46 46" fill="none" stroke="#888" strokeWidth="4"><rect x="2" y="2" width="42" height="42" rx="2" /></svg>
        </button>
      </SystemNav>
    </App>
  );
}
